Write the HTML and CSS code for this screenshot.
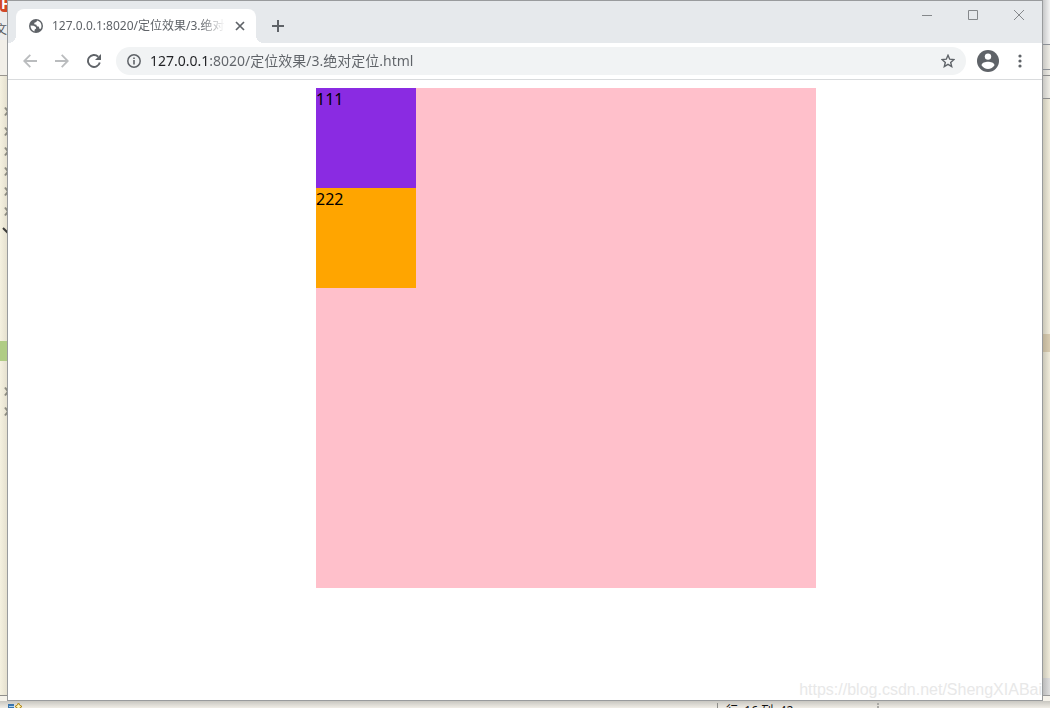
FILE: index.html
```html
<!DOCTYPE html>
<html lang="zh-CN">
<head>
<meta charset="utf-8">
<title>127.0.0.1:8020/定位效果/3.绝对定位.html</title>
<link rel="stylesheet" href="styles.css">
</head>
<body>
<div class="desktop">
  <aside class="editor-left">
    <div class="editor-head"><span class="app-logo">H</span><span class="menu-text">文</span></div>
    <svg class="tree" width="8" height="620" viewBox="0 76 8 620" fill="none">
      <path d="M0 341h8v20H0z" fill="#b0cc85"/>
      <path d="M5 107.500l3 4-3 4M5 127.500l3 4-3 4M5 147.500l3 4-3 4M5 167.500l3 4-3 4M5 187.500l3 4-3 4M5 207.500l3 4-3 4M5 387.500l3 4-3 4M5 407.500l3 4-3 4" stroke="#8b8a80" stroke-width="2"/>
      <path d="M3 228l5 5" stroke="#3a3a38" stroke-width="2"/>
    </svg>
  </aside>

  <main class="window">
    <header class="tabstrip">
      <div class="tab">
        <svg class="globe" width="14" height="14" viewBox="0 0 14 14"><circle cx="7" cy="7" r="7" fill="#5f6368"/><path d="M1.500 6.500l3.200.2 2.100 1.300.4 1.600-1.500 1-.3 1.800C3 11.700 1.500 9.500 1.500 6.500zM8 1.500C10.700 2 12.500 4.200 12.500 6.900c0 1.100-.4 2.200-1 3.100l-1.300-.5-.2-1.700-2.200-.6-.4-1.500-2.200-.5.2-1.500 2-.6z" fill="#fff"/></svg>
        <span class="tab-title">127.0.0.1:8020/定位效果/3.绝对定位.html</span>
        <button class="tab-close" aria-label="关闭标签页"><svg width="10" height="10" viewBox="0 0 10 10"><path d="M1 1l8 8M9 1L1 9" stroke="#5f6368" stroke-width="1.700"/></svg></button>
      </div>
      <button class="new-tab" aria-label="新标签页"><svg width="12" height="12" viewBox="0 0 12 12"><path d="M6 0v12M0 6h12" stroke="#5f6368" stroke-width="2"/></svg></button>
      <div class="window-controls">
        <button aria-label="最小化"><svg width="10" height="10"><path d="M0 5.500h10" stroke="#85888b"/></svg></button>
        <button aria-label="最大化"><svg width="10" height="10"><path d="M.5.5h9v9h-9z" fill="none" stroke="#85888b"/></svg></button>
        <button aria-label="关闭"><svg width="10" height="10"><path d="M0 0l10 10M10 0L0 10" stroke="#85888b"/></svg></button>
      </div>
    </header>

    <nav class="toolbar">
      <button aria-label="后退"><svg width="14" height="14" viewBox="0 0 14 14" fill="none" stroke="#babcbe" stroke-width="1.800"><path d="M14 7H1.500M7.300.8L1.200 7l6.100 6.200"/></svg></button>
      <button aria-label="前进"><svg width="14" height="14" viewBox="0 0 14 14" fill="none" stroke="#babcbe" stroke-width="1.800"><path d="M0 7h12.500M6.700.8L12.800 7l-6.100 6.200"/></svg></button>
      <button aria-label="重新加载"><svg width="14" height="14" viewBox="0 0 14 14"><path d="M12.800 8.500A6 6 0 1 1 11.200 2.700" fill="none" stroke="#5f6368" stroke-width="1.900"/><path d="M14 0v6H8z" fill="#5f6368"/></svg></button>
      <div class="omnibox">
        <svg width="14" height="14" viewBox="0 0 14 14"><circle cx="7" cy="7" r="6.200" fill="none" stroke="#5f6368" stroke-width="1.500"/><path d="M6.200 6h1.600v4.500H6.200zM6.200 3.400h1.600V5H6.200z" fill="#5f6368"/></svg>
        <input class="address" type="text" aria-label="地址" value="127.0.0.1:8020/定位效果/3.绝对定位.html">
        <button class="bookmark" aria-label="收藏"><svg width="14" height="14" viewBox="0 0 14 14"><path d="M7 1.300l1.700 3.900 4.200.4-3.200 2.800 1 4.200L7 10.400l-3.700 2.200 1-4.200L1.100 5.600l4.200-.4z" fill="none" stroke="#5f6368" stroke-width="1.400"/></svg></button>
      </div>
      <button class="profile" aria-label="用户"><svg width="22" height="22" viewBox="0 0 22 22"><circle cx="11" cy="11" r="11" fill="#5f6368"/><circle cx="11" cy="6.600" r="3.200" fill="#fff"/><path d="M4.500 15.200c0-2.400 4-3.500 6.500-3.500s6.500 1.100 6.500 3.500C16.100 17.500 13.600 19 11 19s-5.100-1.500-6.500-3.800z" fill="#fff"/></svg></button>
      <button class="more" aria-label="菜单"><svg width="4" height="14" viewBox="0 0 4 14" fill="#5f6368"><circle cx="2" cy="2" r="1.600"/><circle cx="2" cy="7" r="1.600"/><circle cx="2" cy="12" r="1.600"/></svg></button>
    </nav>

    <section class="page">
      <div class="outer">
        <div class="box first">111</div>
        <div class="box second">222</div>
      </div>
      <span class="watermark">https://blog.csdn.net/ShengXIABai</span>
    </section>
  </main>

  <aside class="editor-right">
    <div class="pane top"></div>
    <div class="pane tools"></div>
    <div class="pane gap"></div>
    <div class="pane tabs"></div>
    <div class="pane track"><i class="marker"></i><i class="corner"></i></div>
  </aside>

  <footer class="statusbar">
    <svg width="16" height="8" viewBox="0 0 16 8"><path d="M0 1h6v7H0z" fill="#3974ad"/><path d="M1 3h5v1H1zM1 6h5v1H1z" fill="#a9d2ef"/><path d="M10.500-.5l1 2.500 2.500 1.500L11.500 5l-1 2.500-1-2.500L7 3.500 9.500 2z" fill="#fff5bd" stroke="#ae8109"/></svg>
    <span class="position">行: 16 列: 42</span>
    <i class="divider"></i>
  </footer>
</div>
</body>
</html>
```
FILE: styles.css
```css
* {
  box-sizing: border-box;
}

body {
  margin: 0;
  font-family: "Noto Sans", "Noto Sans CJK SC", sans-serif;
}

button {
  display: flex;
  align-items: center;
  justify-content: center;
  padding: 0;
  border: 0;
  background: none;
}

.desktop {
  display: grid;
  grid-template-columns: 7px minmax(0, 1fr) 7px;
  grid-template-rows: minmax(0, 1fr) 7px;
  height: 100vh;
  overflow: hidden;
  background: #f5f2ea;
}

/* Editor behind the browser */
.editor-left {
  overflow: hidden;
  border-bottom: 1px solid #908f8b;
  margin-bottom: 5px;
  background: linear-gradient(90deg, #f5f1e0, #e5e0cf);
}

.editor-head {
  display: flex;
  flex-direction: column;
  gap: 10px;
  height: 76px;
  border-bottom: 1px solid #99958f;
  background: linear-gradient(#ececec 40px, #f2efe8 40px);
}

.app-logo {
  height: 12px;
  padding-left: 1px;
  background: #d24726;
  border-radius: 0 0 0 4px;
  color: #fff;
  font-size: 14px;
  font-weight: bold;
  line-height: 8px;
}

.menu-text {
  color: #55585c;
  font-size: 12px;
  line-height: 16px;
  direction: rtl;
}

.tree {
  display: block;
}

.editor-right {
  display: flex;
  flex-direction: column;
  margin-bottom: 5px;
  border-bottom: 1px solid #999;
}

.pane {
  background: linear-gradient(90deg, #c9c8c4, #efede6);
}

.pane.top {
  height: 45px;
  border-bottom: 1px solid #8c9096;
  background: linear-gradient(90deg, #c8c9ca, #f3f3f3);
}

.pane.tools {
  height: 25px;
  border-bottom: 1px solid #8c9096;
}

.pane.gap {
  height: 6px;
  border-bottom: 1px solid #8c8c8c;
}

.pane.tabs {
  height: 23px;
  border-bottom: 1px solid #8c8c8c;
}

.pane.track {
  display: flex;
  flex: 1;
  flex-direction: column;
  justify-content: space-between;
  padding-top: 235px;
  background: linear-gradient(90deg, #cac7b8, #f1ecdb);
}

.marker {
  height: 18px;
  background: linear-gradient(90deg, #bdb198, #d8cbb0);
}

.corner {
  height: 17px;
  background: linear-gradient(90deg, #bbb, #dedede);
}

.statusbar {
  display: flex;
  grid-column: 1 / -1;
  align-items: flex-start;
  overflow: hidden;
  padding: 2px 0 0 8px;
  background: linear-gradient(#c8c6c0, #f0ede6);
}

.position {
  margin-left: 693px;
  padding-left: 8px;
  border-left: 1px solid #8c8c88;
  color: #111;
  font-size: 12px;
  line-height: 16px;
}

.divider {
  height: 8px;
  margin-left: 84px;
  border-left: 2px dotted #aaa9a5;
}

/* Browser window */
.window {
  display: flex;
  flex-direction: column;
  min-width: 0;
  border: 1px solid #999b9d;
  background: #fff;
}

.tabstrip {
  display: flex;
  height: 42px;
  padding: 8px 0 0 8px;
  background:
    radial-gradient(circle at 0 0, #e6e9ec 8px, #fff 8px) 0 100% / 8px 8px no-repeat,
    radial-gradient(circle at 100% 0, #e6e9ec 8px, #fff 8px) 248px 100% / 8px 8px no-repeat,
    #e6e9ec;
}

.tab {
  display: flex;
  align-items: center;
  gap: 9px;
  width: 240px;
  padding: 0 10px 0 13px;
  border-radius: 8px 8px 0 0;
  background: #fff;
}

.globe {
  flex: none;
}

.tab-title {
  flex: 1;
  min-width: 0;
  overflow: hidden;
  color: #5f6368;
  font-size: 12px;
  line-height: 18px;
  white-space: nowrap;
  mask-image: linear-gradient(90deg, #000 86%, transparent);
}

.tab-close {
  width: 12px;
  height: 16px;
}

.new-tab {
  width: 28px;
  height: 34px;
  margin-left: 8px;
}

.window-controls {
  display: flex;
  height: 28px;
  margin: -8px 0 0 auto;
}

.window-controls button {
  width: 46px;
}

.toolbar {
  display: flex;
  align-items: center;
  height: 37px;
  padding: 0 6px;
  border-bottom: 1px solid #d9dbdd;
}

.toolbar > button {
  width: 32px;
  height: 28px;
}

.omnibox {
  display: flex;
  flex: 1;
  align-items: center;
  gap: 9px;
  height: 28px;
  margin: 0 6px;
  padding: 0 10px 0 11px;
  border-radius: 14px;
  background: #f1f3f4;
}

.address {
  flex: 1;
  min-width: 0;
  height: 24px;
  padding: 0;
  border: 0;
  outline: 0;
  background: linear-gradient(90deg, #202124 59px, #5f6368 59px);
  background-clip: text;
  color: #5f6368;
  -webkit-text-fill-color: transparent;
  font: 14px/24px "Noto Sans", "Noto Sans CJK SC", sans-serif;
}

.bookmark {
  width: 16px;
  height: 16px;
}

.page {
  display: flex;
  flex: 1;
  flex-direction: column;
  justify-content: space-between;
  min-height: 0;
  padding-top: 8px;
}

.outer {
  width: 500px;
  height: 500px;
  margin-left: 308px;
  background: pink;
}

.box {
  width: 100px;
  height: 100px;
  color: #000;
  font-size: 16px;
  line-height: 22px;
}

.first {
  background: blueviolet;
}

.second {
  background: orange;
}

.watermark {
  align-self: flex-end;
  color: #e8e8e8;
  font: 16px/20px "Liberation Sans", Arial, sans-serif;
}
```
